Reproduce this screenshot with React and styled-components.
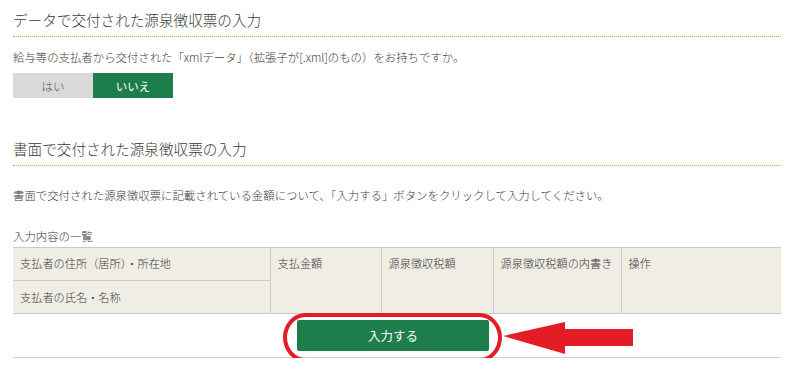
import React from "react";
import styled, { createGlobalStyle } from "styled-components";

const Global = createGlobalStyle`
  html, body { margin: 0; padding: 0; background: #fff; }
  body {
    font-family: "Noto Sans CJK JP", "Noto Sans", sans-serif;
    color: #3a3a3a;
  }
`;

const Page = styled.div`
  padding: 0 10px 0 13px;
  width: 768px;
`;

const Heading = styled.h2`
  margin: ${(p) => p.$top}px 0 0;
  padding: 0 0 6px;
  font-size: 14.6px;
  font-weight: 300;
  line-height: 20px;
  color: #3a3a3a;
  border-bottom: 1px dotted #c9a54a;
`;

const Text = styled.p`
  margin: ${(p) => p.$top}px 0 0;
  font-size: 11.4px;
  font-weight: 300;
  line-height: 16px;
  color: #3a3a3a;
`;

const Toggle = styled.div`
  display: flex;
  margin-top: 8px;
`;

const ToggleBtn = styled.button`
  width: 80px;
  height: 25px;
  border: none;
  padding: 0;
  font-family: inherit;
  font-size: 11.5px;
  font-weight: ${(p) => (p.$active ? 400 : 300)};
  background: ${(p) => (p.$active ? "#1d7d4b" : "#d9d9d9")};
  color: ${(p) => (p.$active ? "#fff" : "#555")};
`;

const Table = styled.table`
  margin-top: 3px;
  width: 768px;
  border-collapse: collapse;
  table-layout: fixed;
  background: #f0ede5;
  border-top: 1px solid #c9c9c9;
  border-bottom: 1px solid #c9c9c9;
`;

const Th = styled.th`
  font-weight: 300;
  font-size: 11.2px;
  line-height: 16px;
  text-align: left;
  vertical-align: top;
  white-space: nowrap;
  overflow: hidden;
  padding: ${(p) => (p.$second ? "8px 6px 8px 7px" : "7px 6px 9px 7px")};
  height: ${(p) => (p.$span ? 65 : 32)}px;
  box-sizing: border-box;
  color: #3a3a3a;
  border-left: ${(p) => (p.$first ? "none" : "1px solid #c9c9c9")};
  border-top: ${(p) => (p.$second ? "1px solid #c9c9c9" : "none")};
`;

const ActionRow = styled.div`
  display: flex;
  justify-content: center;
  padding: 6px 8px 6px 0;
  border-bottom: 1px solid #d0d0d0;
`;

const ButtonWrap = styled.div`
  position: relative;
`;

const PrimaryButton = styled.button`
  width: 192px;
  height: 31px;
  border: none;
  border-radius: 2px;
  background: #1d7d4b;
  color: #fff;
  font-family: inherit;
  font-size: 12.5px;
`;

const Ring = styled.div`
  position: absolute;
  left: -14px;
  top: -7px;
  width: 219px;
  height: 49px;
  box-sizing: border-box;
  border: 4px solid #e31c25;
  border-radius: 24px / 26px;
  pointer-events: none;
`;

const Arrow = styled.svg`
  position: absolute;
  left: 205px;
  top: 0;
  overflow: visible;
  pointer-events: none;
`;

export default function App() {
  return (
    <>
      <Global />
      <Page>
        <Heading $top={10}>データで交付された源泉徴収票の入力</Heading>
        <Text $top={12}>
          給与等の支払者から交付された「xmlデータ」（拡張子が[.xml]のもの）をお持ちですか。
        </Text>
        <Toggle>
          <ToggleBtn>はい</ToggleBtn>
          <ToggleBtn $active>いいえ</ToggleBtn>
        </Toggle>

        <Heading $top={41}>書面で交付された源泉徴収票の入力</Heading>
        <Text $top={21}>
          書面で交付された源泉徴収票に記載されている金額について、「入力する」ボタンをクリックして入力してください。
        </Text>
        <Text $top={25}>入力内容の一覧</Text>

        <Table>
          <colgroup>
            <col style={{ width: 257 }} />
            <col style={{ width: 111 }} />
            <col style={{ width: 112 }} />
            <col style={{ width: 128 }} />
            <col style={{ width: 160 }} />
          </colgroup>
          <tbody>
            <tr>
              <Th $first>支払者の住所（居所）・所在地</Th>
              <Th rowSpan={2} $span>支払金額</Th>
              <Th rowSpan={2} $span>源泉徴収税額</Th>
              <Th rowSpan={2} $span>源泉徴収税額の内書き</Th>
              <Th rowSpan={2} $span>操作</Th>
            </tr>
            <tr>
              <Th $first $second>支払者の氏名・名称</Th>
            </tr>
          </tbody>
        </Table>

        <ActionRow>
          <ButtonWrap>
            <PrimaryButton>入力する</PrimaryButton>
            <Ring />
            <Arrow width="140" height="40" viewBox="0 0 140 40">
              <polygon
                points="1,16 63,2 63,9 131,9 131,26 63,26 63,34"
                fill="#e31c25"
              />
            </Arrow>
          </ButtonWrap>
        </ActionRow>
      </Page>
    </>
  );
}
